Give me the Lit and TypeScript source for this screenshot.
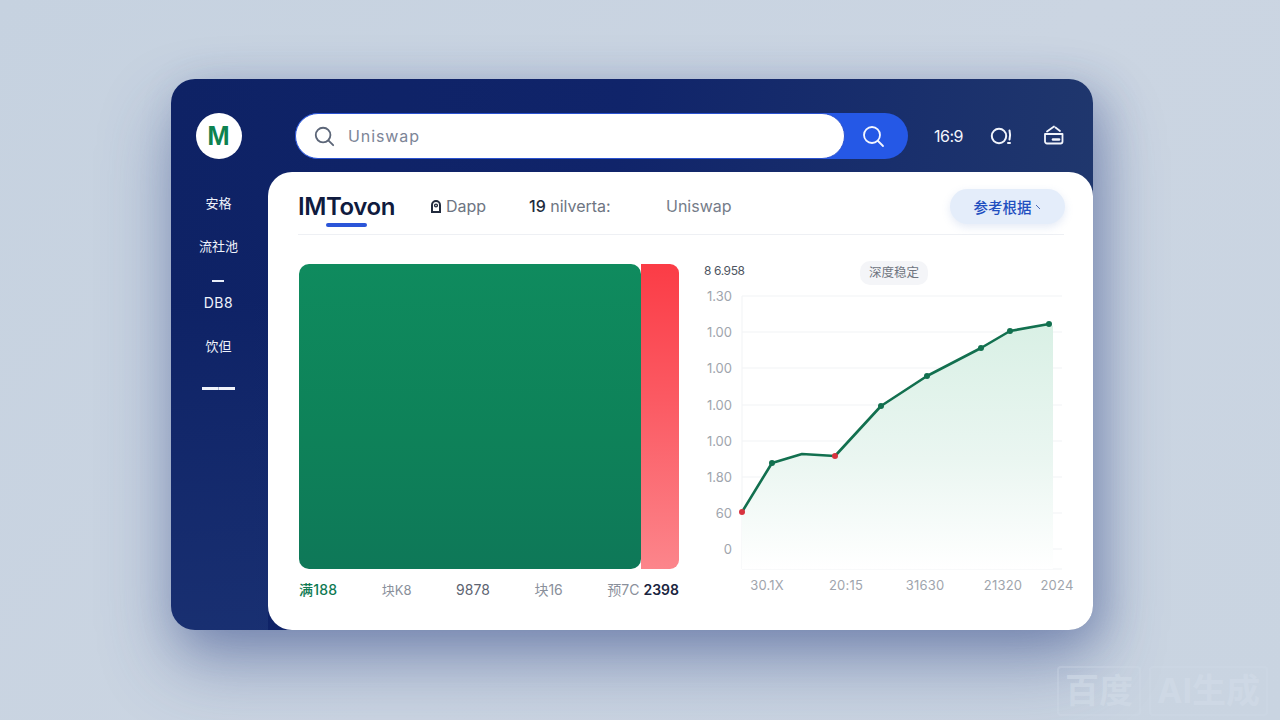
import { LitElement, html, css, svg } from "lit";
import { customElement } from "lit/decorators.js";

const grid = [296, 332, 368, 405, 441, 477, 513, 549];
const yLabels: [string, number][] = [["1.30", 296], ["1.00", 332], ["1.00", 368], ["1.00", 405], ["1.00", 441], ["1.80", 477], ["60", 513], ["0", 549]];
const xLabels: [string, number][] = [["30.1X", 767], ["20:15", 846], ["31630", 925], ["21320", 1003], ["2024", 1057]];
const pts: [number, number][] = [[742, 512], [772, 463], [802, 454], [835, 456], [881, 406], [927, 376], [981, 348], [1010, 331], [1049, 324]];
const OX = 700;
const OY = 290;
const line = pts.map(([x, y]) => `${x - OX},${y - OY}`).join(" ");

@customElement("app-root")
export class AppRoot extends LitElement {
  static styles = css`
    :host {
      display: block;
      width: 1280px;
      height: 720px;
      overflow: hidden;
      position: relative;
      box-sizing: border-box;
      padding: 79px 0 0 171px;
      font-family: "Inter", "Noto Sans CJK SC", sans-serif;
      background: linear-gradient(135deg, #c6d2e0 0%, #cbd5e2 55%, #c9d4e1 100%);
    }
    .window {
      width: 922px;
      height: 551px;
      border-radius: 24px;
      display: grid;
      grid-template-columns: 97px 1fr;
      background:
        linear-gradient(160deg, transparent 72%, rgba(90, 115, 175, 0.28) 100%),
        linear-gradient(100deg, #0e2265 0%, #10246a 45%, #223a6e 100%);
      box-shadow: 0 34px 70px rgba(50, 72, 135, 0.42), 12px 10px 40px rgba(50, 72, 135, 0.28);
    }
    .side {
      display: flex;
      flex-direction: column;
      align-items: center;
      padding: 34px 0 0 0;
      color: #eef2fb;
      font-size: 13px;
      background: linear-gradient(180deg, transparent 40%, rgba(50, 80, 140, 0.28) 100%);
      border-radius: 24px 0 0 24px;
    }
    .logo {
      width: 46px;
      height: 46px;
      margin-left: -2px;
      border-radius: 50%;
      background: #fff;
      color: #0e8250;
      font: 700 27px/46px "Liberation Sans", sans-serif;
      text-align: center;
      flex: none;
    }
    .nav { margin-top: 35px; display: flex; flex-direction: column; align-items: center; margin-left: -2px; }
    .nav span { display: block; line-height: 18px; }
    .n1 { margin-bottom: 25px; }
    .n2 { margin-bottom: 25px; }
    .dash { width: 12px; height: 2px; background: #e8edf8; }
    .dn { margin-top: 12px; margin-bottom: 25px; font-size: 14px; letter-spacing: 0.5px; }
    .n3 { margin-bottom: 32px; }
    .dash2 { width: 33px; height: 3px; background: linear-gradient(90deg, #f0f3fb 47%, #8d9ac0 49%, #f0f3fb 52%); }
    .main { display: flex; flex-direction: column; min-width: 0; }
    .top {
      height: 93px;
      flex: none;
      display: flex;
      align-items: center;
      padding: 34px 0 13px 27px;
      box-sizing: border-box;
    }
    .search {
      width: 613px;
      height: 46px;
      flex: none;
      border-radius: 23px;
      background: #2558e6;
      display: flex;
    }
    .input {
      width: 550px;
      box-sizing: border-box;
      border: 1.5px solid #2a52d0;
      border-radius: 23px;
      background: #fff;
      display: flex;
      align-items: center;
      gap: 13px;
      padding-left: 17px;
      color: #7d8597;
      font-size: 16px;
      letter-spacing: 0.9px;
    }
    .input svg { width: 22px; height: 22px; }
    .go { flex: 1; display: flex; align-items: center; justify-content: center; padding-right: 7px; }
    .clock { margin-left: 26px; color: #f2f5fc; font-size: 16px; letter-spacing: -0.5px; width: 30px; }
    .i1 { margin-left: 26px; }
    .i2 { margin-left: 29px; margin-top: -3px; }
    .panel {
      flex: 1;
      background: #fff;
      border-radius: 24px;
      padding: 0 29px 0 30px;
      min-height: 0;
      display: flex;
      flex-direction: column;
    }
    .tabs {
      height: 63px;
      flex: none;
      box-sizing: border-box;
      border-bottom: 1px solid #eef0f4;
      display: flex;
      align-items: center;
      position: relative;
      padding-top: 6px;
      color: #6e7582;
      font-size: 16px;
    }
    .brand { font-size: 24px; font-weight: 600; color: #101b3e; letter-spacing: -0.4px; width: 132px; }
    .underline {
      position: absolute;
      left: 28px;
      top: 51px;
      width: 41px;
      height: 3.5px;
      border-radius: 2px;
      background: #2b55d8;
    }
    .dapp { width: 99px; display: flex; align-items: center; gap: 4px; }
    .nil { width: 137px; font-size: 16px; }
    .nil b { color: #222b3d; font-weight: 500; }
    .uni { flex: 1; color: #757c89; }
    .cta {
      width: 115px;
      height: 35px;
      margin-right: -1px;
      border-radius: 18px;
      background: #e4edfa;
      box-shadow: 0 3px 8px rgba(120, 150, 210, 0.2);
      color: #1f4fc0;
      font-size: 14.5px;
      font-weight: 500;
      display: flex;
      align-items: center;
      justify-content: center;
      gap: 3px;
    }
    .cta svg { margin-top: 2px; }
    .body { flex: 1; display: grid; grid-template-columns: 381px 1fr; column-gap: 25px; padding-top: 29px; min-height: 0; }
    .left { display: flex; flex-direction: column; padding-left: 1px; }
    .bars { display: flex; height: 305px; flex: none; }
    .green {
      flex: 1;
      border-radius: 10px;
      background: linear-gradient(180deg, #0f8b5e 0%, #0e8259 55%, #0e7858 100%);
    }
    .red {
      width: 38px;
      border-radius: 0 9px 9px 0;
      background: linear-gradient(180deg, #fb3c46 0%, #fb5a63 45%, #fc858b 100%);
    }
    .legend {
      display: flex;
      justify-content: space-between;
      align-items: center;
      margin-top: 11px;
      font-size: 14px;
      color: #8a909b;
      line-height: 20px;
    }
    .legend .l1 { color: #0e7a52; font-weight: 500; letter-spacing: 0.2px; }
    .legend .l2 { font-size: 13px; }
    .legend .l3 { color: #5d6471; }
    .legend b { color: #1a2440; font-weight: 600; }
    .right { position: relative; }
    .chead {
      display: flex;
      align-items: center;
      height: 24px;
      margin-top: -3px;
      font-size: 12px;
      color: #4e5561;
      letter-spacing: -0.4px;
    }
    .val { margin-top: -5px; width: 40px; white-space: nowrap; }
    .pill {
      margin-left: 116px;
      width: 68px;
      height: 24px;
      line-height: 24px;
      text-align: center;
      border-radius: 10px;
      background: #f4f5f8;
      color: #6e7480;
      font-size: 12.5px;
      letter-spacing: 0;
    }
    svg.chart { display: block; position: absolute; left: -4px; top: 26px; overflow: visible; }
    .gl { stroke: #f1f3f5; stroke-width: 1; }
    .yt { font-size: 13px; fill: #a0a5ad; text-anchor: end; }
    .xt { font-size: 13px; fill: #a0a5ad; text-anchor: middle; letter-spacing: 0.2px; }
    .watermark {
      position: absolute;
      right: 12px;
      bottom: 4px;
      display: flex;
      gap: 8px;
      color: rgba(210, 220, 232, 0.6);
      font-size: 34px;
      font-weight: 700;
      line-height: 46px;
    }
    .watermark span { border: 2px solid rgba(210, 220, 232, 0.3); border-radius: 4px; padding: 0 6px; }
  `;

  private searchIcon(color: string, sw: number) {
    return html`<svg width="24" height="24" viewBox="0 0 24 24" fill="none" stroke=${color} stroke-width=${sw} stroke-linecap="round">
      <circle cx="11" cy="11" r="8"></circle><path d="M17 17l5 5"></path></svg>`;
  }

  private chart() {
    return svg`
      <defs>
        <linearGradient id="area" x1="0" y1="0" x2="0" y2="1">
          <stop offset="0" stop-color="#d9f0e5"></stop>
          <stop offset="0.55" stop-color="#eaf6f1"></stop>
          <stop offset="1" stop-color="#ffffff"></stop>
        </linearGradient>
      </defs>
      ${grid.map((y) => svg`<line class="gl" x1="42" x2="362" y1=${y - OY} y2=${y - OY}></line>`)}
      <line class="gl" x1="42" x2="42" y1="6" y2="279"></line>
      <line class="gl" x1="42" x2="362" y1="279" y2="279"></line>
      <polygon points="42,279 ${line} 353,36 353,279" fill="url(#area)"></polygon>
      <polyline points=${line} fill="none" stroke="#12704f" stroke-width="2.6" stroke-linejoin="round"></polyline>
      ${pts.map(([x, y], i) => svg`<circle cx=${x - OX} cy=${y - OY} r=${i === 2 ? 0 : 3} fill=${i === 0 || i === 3 ? "#d8333f" : "#12704f"}></circle>`)}
      ${yLabels.map(([t, y]) => svg`<text class="yt" x="32" y=${y - OY + 5}>${t}</text>`)}
      ${xLabels.map(([t, x]) => svg`<text class="xt" x=${x - OX} y="300">${t}</text>`)}
    `;
  }

  render() {
    return html`
      <div class="window">
        <aside class="side">
          <div class="logo">M</div>
          <nav class="nav">
            <span class="n1">安格</span>
            <span class="n2">流社池</span>
            <span class="dash"></span>
            <span class="dn">DB8</span>
            <span class="n3">饮但</span>
            <span class="dash2"></span>
          </nav>
        </aside>
        <div class="main">
          <header class="top">
            <div class="search">
              <div class="input">${this.searchIcon("#5c6678", 2)}<span>Uniswap</span></div>
              <div class="go">${this.searchIcon("#f4f7ff", 1.8)}</div>
            </div>
            <span class="clock">16:9</span>
            <svg class="i1" width="24" height="20" viewBox="0 0 24 20" fill="none" stroke="#f2f5fc" stroke-width="2" stroke-linecap="round">
              <circle cx="9" cy="10" r="7.2"></circle><path d="M19.5 4.5c.8 3 .8 6 0 9M18 17h2"></path>
            </svg>
            <svg class="i2" width="22" height="20" viewBox="0 0 22 20" fill="none" stroke="#f2f5fc" stroke-width="1.8" stroke-linecap="round" stroke-linejoin="round">
              <path d="M2 9h17.5v7.5a2 2 0 0 1-2 2H4a2 2 0 0 1-2-2z"></path>
              <path d="M4 6.5L11 1.5M12.5 2.5L17 6"></path><path d="M10 14.5h6" stroke-width="2.6"></path>
            </svg>
          </header>
          <section class="panel">
            <div class="tabs">
              <span class="brand">IMTovon</span>
              <span class="underline"></span>
              <span class="dapp">
                <svg width="12" height="15" viewBox="0 0 12 15" fill="none" stroke="#222b3d" stroke-width="2">
                  <path d="M2 13V6a4 4 0 0 1 8 0v7z"></path><circle cx="6" cy="6.5" r="1.4" stroke-width="1.4"></circle>
                </svg>Dapp</span>
              <span class="nil"><b>19</b> nilverta:</span>
              <span class="uni">Uniswap</span>
              <span class="cta">参考根据<svg width="7" height="7" viewBox="0 0 7 7" fill="none" stroke="#4a6bb8" stroke-width="1"><path d="M1 1l4 4"></path></svg></span>
            </div>
            <div class="body">
              <div class="left">
                <div class="bars"><div class="green"></div><div class="red"></div></div>
                <div class="legend">
                  <span class="l1">满188</span>
                  <span class="l2">块K8</span>
                  <span class="l3">9878</span>
                  <span>块16</span>
                  <span>预7C <b>2398</b></span>
                </div>
              </div>
              <div class="right">
                <div class="chead"><span class="val">8 6.958</span><span class="pill">深度稳定</span></div>
                <svg class="chart" width="375" height="310" viewBox="0 0 375 310">${this.chart()}</svg>
              </div>
            </div>
          </section>
        </div>
      </div>
      <div class="watermark"><span>百度</span><span>AI生成</span></div>
    `;
  }
}
